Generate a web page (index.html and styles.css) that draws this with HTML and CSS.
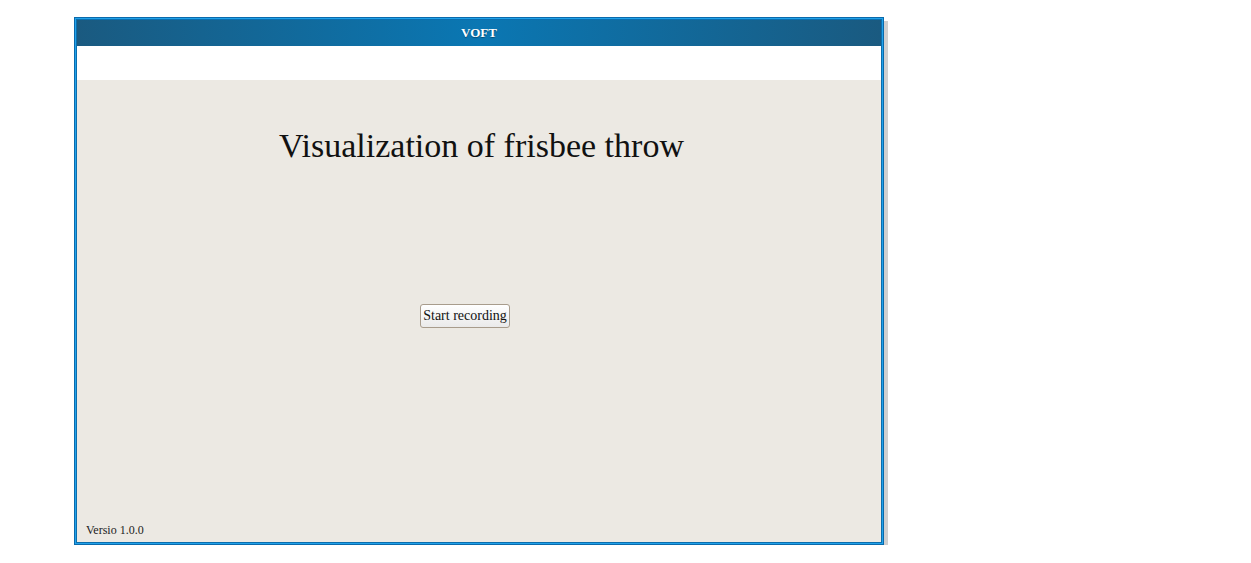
FILE: index.html
```html
<!DOCTYPE html>
<html>
<head>
<meta charset="utf-8">
<title>VOFT</title>
<link rel="stylesheet" href="styles.css">
</head>
<body>
<div class="page">
  <div class="frame">
    <div class="inner">
      <div class="header">VOFT</div>
      <div class="strip"></div>
      <div class="content">
        <h1 class="title">Visualization of frisbee throw</h1>
        <div class="actions">
          <button class="btn" type="button">Start recording</button>
        </div>
        <div class="footer">Versio 1.0.0</div>
      </div>
    </div>
  </div>
</div>
</body>
</html>
```

FILE: styles.css
```css
html, body {
  margin: 0;
  padding: 0;
  background: #ffffff;
}
body {
  font-family: "Liberation Serif", "Times New Roman", serif;
  color: #111;
}
.page {
  padding: 17px 0 0 74px;
}
.frame {
  width: 808px;
  border: 1px solid #0a6aab;
  background: #22a2ea;
  box-shadow: 4px 4px 0 #cfcfcf;
}
.inner {
  margin: 1px;
  border: 1px solid #0b6eae;
  display: flex;
  flex-direction: column;
  height: 522px;
  background: #fff;
}
.header {
  height: 26px;
  line-height: 26px;
  text-align: center;
  color: #fff;
  font-weight: bold;
  font-size: 13px;
  text-shadow: 0 1px 1px rgba(0,0,0,0.35);
  background: linear-gradient(to right, #1a5a80 0%, #0a77b3 50%, #1a5a80 100%);
}
.strip {
  height: 34px;
  background: #fff;
}
.content {
  flex: 1;
  background: #ece9e3;
  display: flex;
  flex-direction: column;
  padding: 0 0 5px 9px;
}
.title {
  margin: 46px 0 0 0;
  padding-right: 4px;
  font-size: 34px;
  line-height: 39px;
  font-weight: normal;
  text-align: center;
  color: #111;
}
.actions {
  margin-top: 139px;
  display: flex;
  justify-content: center;
  padding-right: 37px;
}
.btn {
  font-family: "Liberation Serif", "Times New Roman", serif;
  font-size: 14px;
  color: #111;
  height: 24px;
  padding: 0 2px;
  border: 1px solid #a89c8c;
  border-radius: 3px;
  background: linear-gradient(#ffffff, #eaeaea);
}
.footer {
  margin-top: auto;
  font-size: 12px;
  line-height: 14px;
  color: #222;
}
```
